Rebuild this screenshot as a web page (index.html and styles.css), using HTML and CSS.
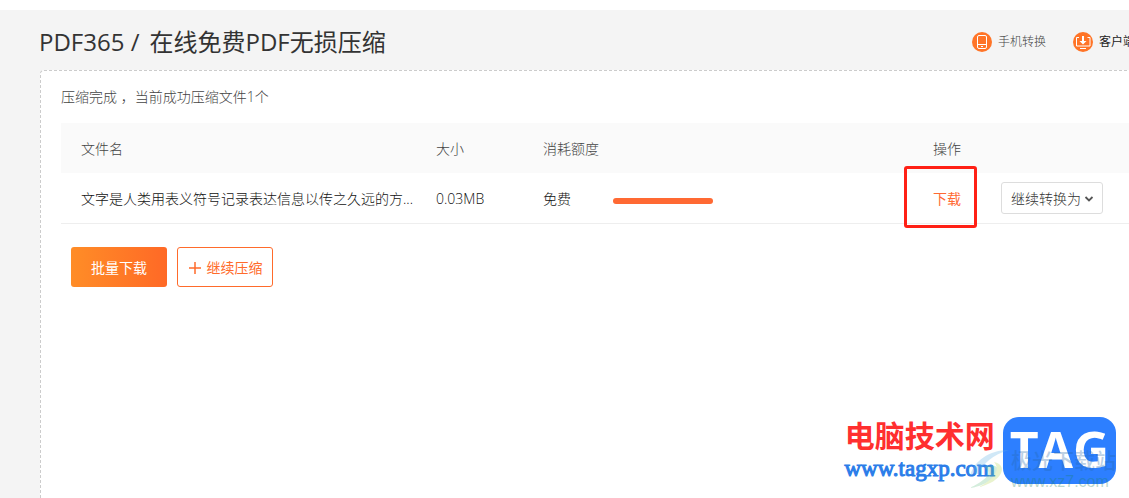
FILE: index.html
```html
<!DOCTYPE html>
<html lang="zh-CN">
<head>
<meta charset="utf-8">
<meta name="viewport" content="width=device-width, initial-scale=1">
<title>PDF365 / 在线免费PDF无损压缩</title>
<link rel="stylesheet" href="styles.css">
</head>
<body>
<div class="page">
  <header class="header">
    <h1 class="title"><span>PDF365 /</span><span>在线免费PDF无损压缩</span></h1>
    <nav class="nav">
      <a class="nav-link" href="#phone">
        <svg class="nav-icon" viewBox="0 0 20 20" aria-hidden="true">
          <circle cx="10" cy="10" r="10" fill="#ff7427"/>
          <rect x="5.5" y="3.5" width="9" height="13" rx="1.5" fill="none" stroke="#fff"/>
          <path d="M5.5 12.5h9M9 14.5h2" fill="none" stroke="#fff"/>
        </svg>
        <span>手机转换</span>
      </a>
      <a class="nav-link nav-link-dark" href="#client">
        <svg class="nav-icon" viewBox="0 0 20 20" aria-hidden="true">
          <circle cx="10" cy="10" r="10" fill="#ff7427"/>
          <path d="M6 5.5H3.500v8.500h13.500V5.500H14.500M7 16.500h6" fill="none" stroke="#fff"/>
          <path d="M10 4v7" stroke="#fff" stroke-width="2"/>
          <path d="M6.500 9h7L10 12.500z" fill="#fff"/>
        </svg>
        <span>客户端</span>
      </a>
    </nav>
  </header>
  <main class="panel">
    <p class="status">压缩完成 ，当前成功压缩文件1个</p>
    <table class="files">
      <colgroup><col class="col-name"><col class="col-size"><col class="col-quota"><col></colgroup>
      <thead>
        <tr><th>文件名</th><th>大小</th><th>消耗额度</th><th>操作</th></tr>
      </thead>
      <tbody>
        <tr>
          <td><div class="filename">文字是人类用表义符号记录表达信息以传之久远的方...</div></td>
          <td>0.03MB</td>
          <td><div class="quota"><span>免费</span><span class="bar"></span></div></td>
          <td>
            <div class="actions">
              <a class="download" href="#download">下载</a>
              <div class="convert">
                <select class="convert-select" aria-label="继续转换为"><option>继续转换为</option></select>
                <svg class="chevron" viewBox="0 0 10 6" aria-hidden="true"><path d="M1.500 1L5 4.500 8.500 1" fill="none" stroke="#555" stroke-width="1.800"/></svg>
              </div>
            </div>
          </td>
        </tr>
      </tbody>
    </table>
    <div class="buttons">
      <button class="btn btn-primary" type="button">批量下载</button>
      <button class="btn btn-outline" type="button"><svg class="plus" viewBox="0 0 14 14" aria-hidden="true"><path d="M1 7h12M7 1v12" stroke="#ff6b2b" stroke-width="1.500"/></svg><span>继续压缩</span></button>
    </div>
  </main>
  <div class="brand">
    <div class="brand-words">
      <span class="brand-name">电脑技术网</span>
      <span class="brand-url">www.tagxp.com</span>
    </div>
    <div class="brand-tag">TAG</div>
    <div class="mark">
      <svg class="mark-logo" viewBox="0 0 42 42" aria-hidden="true">
        <path d="M1 27C5 12 20 1 40 1C24 6 13 14 10 26C7 23 4 24 1 27Z" fill="#68b5e6"/>
        <path d="M15 18C28 13 36 21 22 31C15 36 8 38 1 39C12 33 27 25 15 18Z" fill="#72c58d"/>
        <path d="M25 13C40 16 33 33 10 38C25 30 32 21 25 13Z" fill="#b9d85b"/>
      </svg>
      <div class="mark-words"><span class="mark-name">极光下载站</span><span class="mark-url">www.xz7.com</span></div>
    </div>
  </div>
</div>
</body>
</html>
```
FILE: styles.css
```css
*,
*::after {
  box-sizing: border-box;
}

body {
  margin: 0;
  background: #f4f4f4;
  color: #666;
  font-family: "Open Sans", "Noto Sans CJK SC", sans-serif;
  font-size: 14px;
  font-weight: 300;
  line-height: 20px;
}

.page {
  position: relative;
  display: flex;
  flex-direction: column;
  min-height: 100vh;
  padding-left: 39px;
  border-top: 10px solid #fff;
  overflow: hidden;
}

.header {
  display: flex;
  align-items: center;
  justify-content: space-between;
  height: 60px;
  padding-top: 4px;
}

.title {
  display: flex;
  gap: 10px;
  margin: 0;
  color: #333;
  font-size: 24px;
  font-weight: 400;
  line-height: 32px;
}

.nav {
  display: flex;
  gap: 27px;
  margin-right: -6px;
  white-space: nowrap;
}

.nav-link {
  display: flex;
  align-items: center;
  gap: 6px;
  color: #444;
  font-size: 12px;
  text-decoration: none;
}

.nav-link-dark {
  color: #222;
  font-weight: 400;
}

.nav-icon {
  width: 20px;
  height: 20px;
}

.panel {
  flex: 1;
  margin: 0 -4px 0 1px;
  padding: 16px 0 20px 20px;
  background: #fff;
  border: 1px dashed #ccc;
  border-bottom: 0;
  border-radius: 4px 0 0 0;
}

.status {
  margin: 0 0 16px;
  color: #444;
}

.files {
  width: 100%;
  border-collapse: separate;
  border-spacing: 0;
  table-layout: fixed;
}

.col-name {
  width: 355px;
}

.col-size {
  width: 107px;
}

.col-quota {
  width: 390px;
}

.files th,
.files td {
  height: 50px;
  padding: 2px 0 0 20px;
  font-weight: 300;
  text-align: left;
  white-space: nowrap;
}

.files th {
  background: #fafafa;
  color: #444;
}

.files td {
  height: 51px;
  border-bottom: 1px solid #eee;
  color: #111;
}

.filename {
  overflow: hidden;
  text-overflow: ellipsis;
}

.quota {
  display: flex;
  align-items: center;
  gap: 42px;
}

.bar {
  width: 100px;
  height: 6px;
  margin-top: 4px;
  background: #ff6933;
  border-radius: 3px;
}

.actions {
  display: flex;
  align-items: center;
  gap: 24px;
  height: 32px;
}

.download {
  position: relative;
  padding-right: 16px;
  color: #ff6933;
  font-weight: 400;
  text-decoration: none;
}

.download::after {
  content: "";
  position: absolute;
  top: -23px;
  right: 0;
  width: 73px;
  height: 62px;
  border: 3px solid #ff2015;
  border-radius: 3px;
}

.convert-select {
  display: block;
  width: 102px;
  height: 32px;
  padding: 1px 0 0 9px;
  appearance: none;
  background: #fff;
  border: 1px solid #ddd;
  border-radius: 3px;
  color: #333;
  font: inherit;
}

.convert {
  position: relative;
  margin-top: -2px;
}

.chevron {
  position: absolute;
  top: 14px;
  right: 9px;
  width: 10px;
  height: 6px;
  pointer-events: none;
}

.buttons {
  display: flex;
  gap: 10px;
  padding: 23px 0 0 10px;
}

.btn {
  display: flex;
  align-items: center;
  justify-content: center;
  gap: 5px;
  width: 96px;
  height: 40px;
  padding: 2px 0 0;
  border: 0;
  border-radius: 3px;
  font: inherit;
  font-weight: 400;
  white-space: nowrap;
}

.btn-primary {
  background: linear-gradient(90deg, #ff8d27, #ff6926);
  color: #fff;
}

.btn-outline {
  background: #fff;
  border: 1px solid #ff6b2b;
  color: #ff6b2b;
}

.plus {
  width: 14px;
  height: 14px;
}

.brand {
  position: absolute;
  right: 13px;
  bottom: 14px;
  display: flex;
  align-items: center;
  gap: 8px;
}

.brand-words {
  display: flex;
  flex-direction: column;
  align-items: center;
}

.brand-name {
  color: #ff2f2f;
  font-size: 30px;
  font-weight: 700;
  line-height: 36px;
}

.brand-url {
  color: #2b7de9;
  font-family: "Liberation Serif", serif;
  font-size: 23px;
  font-weight: 400;
  line-height: 30px;
  -webkit-text-stroke: 1px #2b7de9;
}

.brand-tag {
  width: 113px;
  height: 67px;
  background: #2d7fff;
  border-radius: 16px;
  color: #fff;
  font-size: 50px;
  font-weight: 700;
  line-height: 65px;
  text-align: center;
}

.mark {
  position: absolute;
  right: 0;
  bottom: -8px;
  display: flex;
  align-items: center;
  opacity: 0.3;
}

.mark-logo {
  width: 42px;
  height: 42px;
}

.mark-words {
  display: flex;
  flex-direction: column;
  white-space: nowrap;
}

.mark-name {
  color: #2468a8;
  font-size: 21px;
  font-weight: 500;
  line-height: 24px;
}

.mark-url {
  color: #168060;
  font-family: "Liberation Sans", sans-serif;
  font-size: 16px;
  font-weight: 400;
  line-height: 20px;
}
```
